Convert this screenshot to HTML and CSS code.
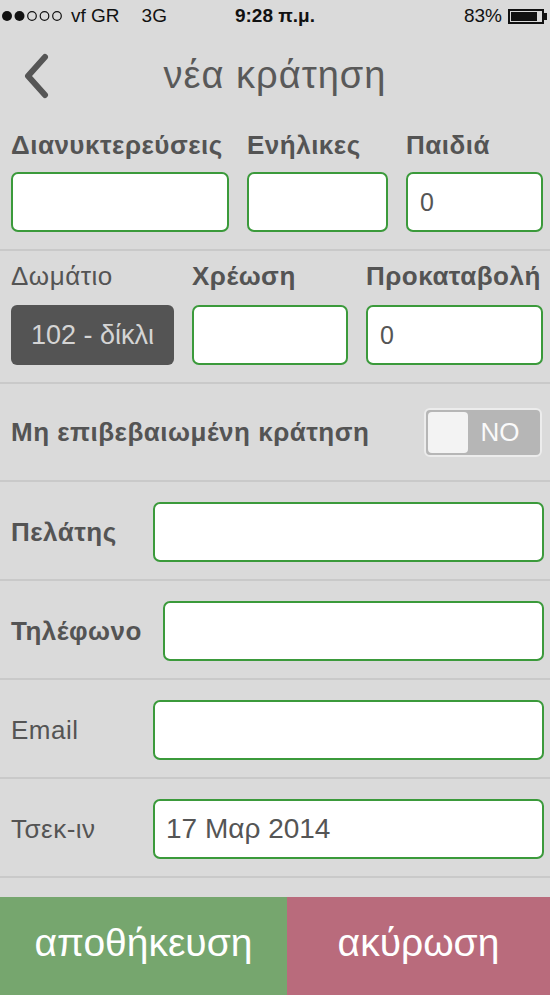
FILE: index.html
```html
<!DOCTYPE html>
<html lang="el">
<head>
<meta charset="utf-8">
<link rel="stylesheet" href="styles.css">
</head>
<body>
<div class="screen">
  <div class="statusbar">
    <div class="sb-left">
      <svg class="dots" width="64" height="12" viewBox="0 0 64 12">
        <circle cx="6" cy="6" r="5" fill="#111"/>
        <circle cx="18.5" cy="6" r="5" fill="#111"/>
        <circle cx="31" cy="6" r="4.3" fill="none" stroke="#111" stroke-width="1.2"/>
        <circle cx="43.5" cy="6" r="4.3" fill="none" stroke="#111" stroke-width="1.2"/>
        <circle cx="56" cy="6" r="4.3" fill="none" stroke="#111" stroke-width="1.2"/>
      </svg>
      <span>vf GR</span><span class="net">3G</span>
    </div>
    <div class="sb-center">9:28 π.μ.</div>
    <div class="sb-right">83% <span class="battery"><span class="battery-fill"></span></span><span class="battery-tip"></span></div>
  </div>
  <div class="header">
    <svg class="back" width="30" height="46" viewBox="0 0 30 46"><polyline points="23,4 6,23 23,42" fill="none" stroke="#555" stroke-width="6" stroke-linecap="round" stroke-linejoin="round"/></svg>
    <div class="title">νέα κράτηση</div>
  </div>

  <div class="section grid3 g1">
    <div class="lbl bold">Διανυκτερεύσεις</div>
    <div class="lbl bold">Ενήλικες</div>
    <div class="lbl bold">Παιδιά</div>
    <div class="input"></div>
    <div class="input"></div>
    <div class="input">0</div>
  </div>

  <div class="section grid3 g2">
    <div class="lbl">Δωμάτιο</div>
    <div class="lbl bold">Χρέωση</div>
    <div class="lbl bold">Προκαταβολή</div>
    <div class="room">102 - δίκλι</div>
    <div class="input"></div>
    <div class="input">0</div>
  </div>

  <div class="section toggle-row">
    <div class="lbl bold">Μη επιβεβαιωμένη κράτηση</div>
    <div class="toggle"><span class="knob"></span><span class="no">NO</span></div>
  </div>

  <div class="section row">
    <div class="lbl bold rl">Πελάτης</div>
    <div class="input grow"></div>
  </div>
  <div class="section row">
    <div class="lbl bold rl">Τηλέφωνο</div>
    <div class="input grow"></div>
  </div>
  <div class="section row">
    <div class="lbl rl">Email</div>
    <div class="input grow"></div>
  </div>
  <div class="section row">
    <div class="lbl rl">Τσεκ-ιν</div>
    <div class="input grow date">17 Μαρ 2014</div>
  </div>
  <div class="spacer"></div>

  <div class="buttons">
    <div class="btn save">αποθήκευση</div>
    <div class="btn cancel">ακύρωση</div>
  </div>
</div>
</body>
</html>
```
FILE: styles.css
```css
* { box-sizing: border-box; }
html, body { margin: 0; padding: 0; }
body {
  background: #dadada;
  font-family: "Liberation Sans", Arial, "Noto Sans", sans-serif;
  color: #545454;
}
.screen {
  width: 550px;
  height: 995px;
  display: flex;
  flex-direction: column;
  overflow: hidden;
}
.statusbar {
  height: 32px;
  flex: 0 0 32px;
  display: flex;
  align-items: center;
  justify-content: space-between;
  font-size: 19px;
  color: #111;
  padding: 0 3px 0 1px;
  position: relative;
}
.sb-left { display: flex; align-items: center; gap: 6px; }
.dots { display: block; }
.net { margin-left: 16px; }
.sb-center {
  position: absolute;
  left: 0; right: 0;
  top: 5px;
  text-align: center;
  font-weight: bold;
  pointer-events: none;
}
.sb-right { display: flex; align-items: center; gap: 6px; }
.battery {
  width: 36px; height: 15px;
  border: 2px solid #111;
  display: inline-block;
  padding: 1px;
}
.battery-fill { display: block; width: 85%; height: 100%; background: #111; }
.battery-tip { width: 3px; height: 7px; background: #111; margin-left: -6px; }
.header {
  height: 88px;
  flex: 0 0 88px;
  display: flex;
  align-items: center;
  position: relative;
  padding-left: 22px;
  padding-bottom: 2px;
}
.back { position: relative; top: 1px; }
.title {
  position: absolute;
  left: 0; right: 0;
  text-align: center;
  font-size: 38px;
  letter-spacing: 1px;
  color: #595959;
  top: 22px;
}
.section {
  border-bottom: 2px solid #c9c9c9;
  flex: 0 0 auto;
}
.grid3 {
  display: grid;
  padding: 10px 6px 17px 11px;
  align-items: end;
  grid-template-rows: 30px 60px;
}
.g1 { grid-template-columns: 218px 141px 137px; column-gap: 18px; row-gap: 12px; }
.g2 { grid-template-columns: 163px 156px 177px; column-gap: 18px; row-gap: 14px; }
.lbl {
  font-size: 26px;
  letter-spacing: 0.5px;
  color: #545454;
  white-space: nowrap;
  line-height: 30px;
}
.bold { font-weight: bold; }
.input {
  height: 60px;
  background: #fff;
  border: 2px solid #3b9a3b;
  border-radius: 7px;
  display: flex;
  align-items: center;
  padding-left: 12px;
  font-size: 25px;
  color: #555;
}
.room {
  height: 60px;
  background: #545454;
  border-radius: 6px;
  color: #d4d4d4;
  font-size: 27px;
  display: flex;
  align-items: center;
  justify-content: center;
  overflow: hidden;
  white-space: nowrap;
}
.toggle-row {
  height: 98px;
  display: flex;
  align-items: center;
  justify-content: space-between;
  padding: 0 8px 0 11px;
}
.toggle {
  width: 118px;
  height: 49px;
  border: 2px solid #ececec;
  border-radius: 6px;
  background: #b6b6b6;
  display: flex;
  align-items: center;
  padding: 2px;
}
.knob {
  width: 40px;
  height: 41px;
  background: #f3f3f3;
  border-radius: 4px;
}
.no {
  flex: 1;
  text-align: center;
  color: #fafafa;
  font-size: 26px;
  padding-right: 6px;
}
.row {
  height: 99px;
  display: flex;
  align-items: flex-start;
  padding: 20px 6px 0 11px;
}
.row .lbl { line-height: 60px; }
.rl { min-width: 121px; margin-right: 21px; }
.grow { flex: 1; }
.date { font-size: 28px; padding-left: 11px; }
.spacer { flex: 1; }
.buttons {
  height: 98px;
  flex: 0 0 98px;
  display: flex;
}
.btn {
  display: flex;
  align-items: center;
  justify-content: center;
  color: #fff;
  font-size: 39px;
  padding-bottom: 6px;
}
.save { width: 287px; background: #76a66e; }
.cancel { flex: 1; background: #b96b7c; }
```
